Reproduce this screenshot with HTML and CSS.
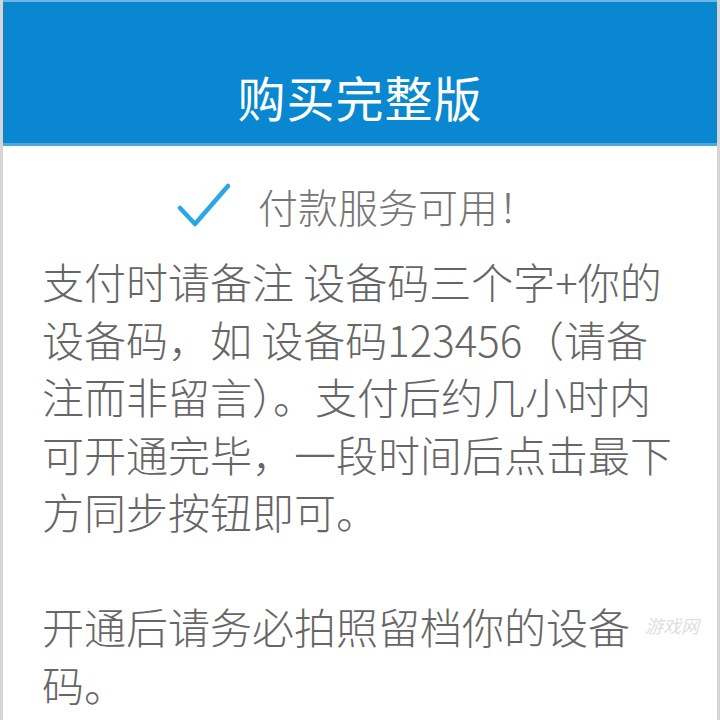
FILE: index.html
```html
<!DOCTYPE html>
<html lang="zh-CN">
  <head>
    <meta charset="UTF-8" />
    <meta name="viewport" content="width=device-width, initial-scale=1.0" />
    <title>购买完整版</title>
    <link rel="stylesheet" href="styles.css">
  </head>
  <body>
    <div class="dialog">
      <div class="dialog-header">
        <h1>购买完整版</h1>
      </div>

      <div class="status">
        <svg class="status-icon" width="56" height="50" viewBox="0 0 56 50">
          <path d="M4 27 L19 43 L52 5" fill="none" stroke="#2aa7e6" stroke-width="4.5" stroke-linecap="round" stroke-linejoin="round" />
        </svg>
        <span>付款服务可用！</span>
      </div>

      <div class="message">
        支付时请备注 设备码三个字+你的设备码，如 设备码123456（请备注而非留言）。支付后约几小时内可开通完毕，一段时间后点击最下方同步按钮即可。<br /><br />开通后请务必拍照留档你的设备码。
      </div>

      <div class="watermark">游戏网</div>
    </div>
  </body>
</html>
```

FILE: styles.css
```css
body {
  margin: 0;
  background: #ffffff;
  font-family: "Noto Sans CJK SC", "Noto Sans", sans-serif;
}
.dialog {
  position: relative;
  height: 720px;
  box-sizing: border-box;
  border-left: 3px solid #d6d6d6;
  border-right: 3px solid #d6d6d6;
  overflow: hidden;
}
.dialog-header {
  height: 141px;
  background: #0987d0;
  border-top: 2px solid #6cb6e2;
  border-bottom: 3px solid #4ea6dc;
  display: flex;
  align-items: flex-end;
  justify-content: center;
}
.dialog-header h1 {
  margin: 0 0 12px 0;
  color: #ffffff;
  font-size: 48px;
  font-weight: normal;
  line-height: 70px;
  letter-spacing: 1px;
}
.status {
  display: flex;
  align-items: center;
  justify-content: center;
  gap: 26px;
  margin-top: 33px;
  height: 54px;
  color: #767676;
  font-size: 40px;
  font-weight: 300;
}
.status-icon {
  margin-left: -6px;
}
.message {
  padding: 19px 0 0 39px;
  width: 644px;
  color: #666666;
  font-size: 42px;
  font-weight: 300;
  line-height: 57.5px;
}
.watermark {
  position: absolute;
  left: 642px;
  top: 612px;
  color: #e0e0e0;
  font-size: 18px;
  font-style: italic;
}
```
